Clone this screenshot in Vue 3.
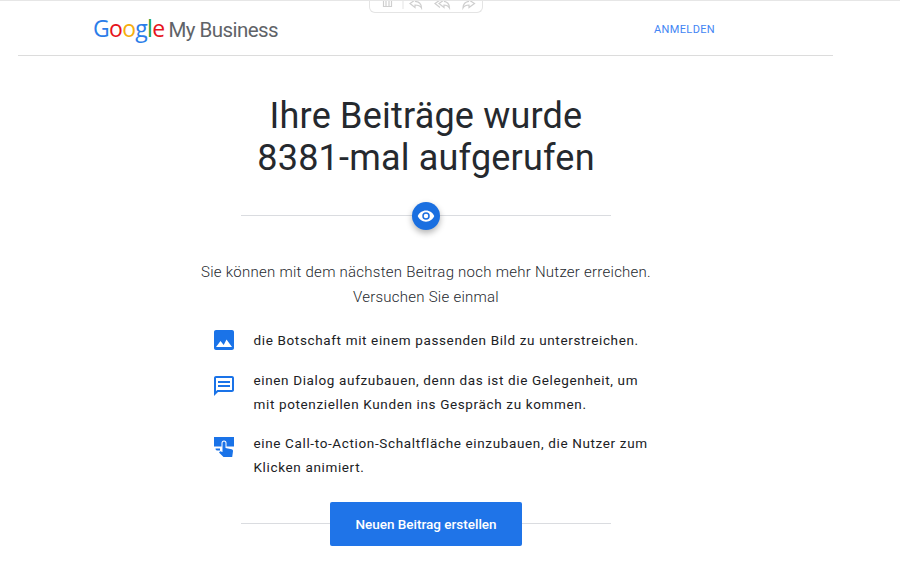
<script setup>
const items = [
  { id: 'image', lines: ['die Botschaft mit einem passenden Bild zu unterstreichen.'] },
  { id: 'chat', lines: ['einen Dialog aufzubauen, denn das ist die Gelegenheit, um', 'mit potenziellen Kunden ins Gespräch zu kommen.'] },
  { id: 'touch', lines: ['eine Call-to-Action-Schaltfläche einzubauen, die Nutzer zum', 'Klicken animiert.'] },
]
</script>

<template>
  <div class="page">
    <div class="toolbar" aria-hidden="true">
      <svg width="114" height="12" viewBox="0 0 114 12" fill="none" stroke="#cfcfcf" stroke-width="1.2">
        <path d="M14.500 0v6.500h8V0M17 0v6M20 0v6" />
        <path d="M34 0v9" stroke="#e8e8e8" />
        <path d="M46 0L41 3.500 46 7.500V5c3 0 5 .5 6.500 3C52.500 4 50 1.500 46 1.500" />
        <path d="M71 0L66 3.500 71 7.500M75 0L70 3.500 75 7.500V5c2 0 4 .5 5.500 3C80.500 4 78 1.500 75 1.500" />
        <path d="M100 0L105.500 3.500 100 7.500V5c-3 0-4.500.5-6 3 0-4 2.500-6.500 6-6.500" />
      </svg>
    </div>

    <header class="header">
      <div class="logo">
        <span class="google"><span class="b">G</span><span class="r">o</span><span class="y">o</span><span class="b">g</span><span class="g">l</span><span class="r">e</span></span>
        <span class="product">My Business</span>
      </div>
      <a class="signin">ANMELDEN</a>
    </header>

    <main class="main">
      <h1 class="title">Ihre Beiträge wurde<br />8381-mal aufgerufen</h1>

      <div class="divider">
        <span class="eye">
          <svg width="18" height="18" viewBox="0 0 24 24"><path fill="#fff" d="M12 4.500C7 4.500 2.700 7.600 1 12c1.700 4.400 6 7.500 11 7.500s9.300-3.100 11-7.500c-1.700-4.400-6-7.500-11-7.500zM12 17a5 5 0 1 1 0-10 5 5 0 0 1 0 10zm0-8a3 3 0 1 0 0 6 3 3 0 0 0 0-6z" /></svg>
        </span>
      </div>

      <p class="intro">Sie können mit dem nächsten Beitrag noch mehr Nutzer erreichen.<br />Versuchen Sie einmal</p>

      <ul class="list">
        <li v-for="item in items" :key="item.id" class="item" :class="'item-' + item.id">
          <span class="icon">
            <svg v-if="item.id === 'image'" width="24" height="24" viewBox="0 0 24 24"><path fill="#1a73e8" d="M22 20V4c0-1.100-.9-2-2-2H4c-1.100 0-2 .9-2 2v16c0 1.100.9 2 2 2h16c1.100 0 2-.9 2-2zM4 19l4.500-6 3.200 4 2.800-5.500L20 19H4z" /></svg>
            <svg v-else-if="item.id === 'chat'" width="24" height="24" viewBox="0 0 24 24"><path fill="#1a73e8" d="M20 2H4c-1.100 0-2 .9-2 2v18l4-4h14c1.100 0 2-.9 2-2V4c0-1.100-.9-2-2-2zm0 14H5.200L4 17.200V4h16v12zM6 7h12v2H6V7zm0 4h12v2H6v-2z" /></svg>
            <svg v-else width="24" height="24" viewBox="0 0 24 24"><path fill="#1a73e8" d="M2 2h20v9.500h-7.500V8a2.500 2.500 0 0 0-5 0v3.500H2V2zM10.500 8a1.500 1.500 0 0 1 3 0v5l6 1.200c1 .2 1.700 1 1.500 2.100L20.200 22H11.500L7 17.500l1.200-1.200 2.300.7V8zM3.500 13.500h4.500V15.500H5c-.8 0-1.500-.8-1.500-2z" /></svg>
          </span>
          <span class="text"><template v-for="(l, i) in item.lines" :key="i"><br v-if="i" />{{ l }}</template></span>
        </li>
      </ul>

      <div class="cta">
        <button class="button">Neuen Beitrag erstellen</button>
      </div>
    </main>
  </div>
</template>

<style>
html, body { margin: 0; background: #fff; overflow: hidden; }
</style>

<style scoped>
.page {
  position: relative;
  width: 900px;
  height: 579px;
  overflow: hidden;
  box-sizing: border-box;
  border-top: 1px solid #e6e6e6;
  font-family: Roboto, "Liberation Sans", sans-serif;
  color: #202124;
  background: #fff;
}
.toolbar {
  position: absolute;
  left: 369px;
  top: -1px;
  width: 114px;
  height: 13px;
  box-sizing: border-box;
  border: 1px solid #e4e4e4;
  border-top: 0;
  border-radius: 0 0 6px 6px;
  background: #fff;
  overflow: hidden;
}
.toolbar svg { display: block; margin-left: -1px; }
.header {
  margin: 0 67px 0 18px;
  height: 55px;
  box-sizing: border-box;
  border-bottom: 1px solid #dcdcdc;
  padding: 0 118px 0 75px;
  display: flex;
  align-items: center;
  justify-content: space-between;
}
.logo { display: flex; gap: 4px; align-items: baseline; font-size: 23px; letter-spacing: -0.7px; }
.google { font-family: "Open Sans", sans-serif; }
.product { color: #5f6368; font-size: 20.500px; letter-spacing: -0.55px; }
.b { color: #2b7de9; } .r { color: #e6131c; } .y { color: #f6ae0c; } .g { color: #1fa33c; }
.signin { color: #4285f4; font-size: 11px; letter-spacing: 0.35px; margin-top: 2px; }
.main {
  width: 852px;
  display: flex;
  flex-direction: column;
  align-items: center;
}
.title {
  margin: 39px 0 0;
  font-size: 36px;
  line-height: 42px;
  font-weight: 400;
  text-align: center;
  color: #25292e;
  letter-spacing: 0.2px;
}
.divider {
  width: 370px;
  height: 1px;
  background: #dadce0;
  margin-top: 36px;
  display: flex;
  justify-content: center;
  align-items: center;
}
.eye {
  width: 28px;
  height: 28px;
  flex: none;
  border-radius: 50%;
  background: #1a6fe0;
  box-shadow: 0 3px 6px rgba(0, 0, 0, 0.3);
  display: flex;
  align-items: center;
  justify-content: center;
}
.intro {
  margin: 44px 0 0;
  font-size: 15px;
  font-weight: 300;
  line-height: 25px;
  text-align: center;
  color: #25292e;
  letter-spacing: 0.25px;
}
.list {
  list-style: none;
  margin: 18px 0 0 11px;
  padding: 0;
  width: 440px;
}
.item {
  display: flex;
  gap: 18px;
  margin-bottom: 15.500px;
}
.icon { width: 24px; height: 24px; flex: none; }
.item-chat .icon { margin-top: 6px; }
.item-touch .icon { margin-top: 4px; }
.text {
  font-size: 13.500px;
  line-height: 24px;
  letter-spacing: 0.64px;
  color: #202124;
  white-space: nowrap;
}
.cta {
  width: 370px;
  margin-top: 7px;
  display: flex;
  justify-content: center;
  background: linear-gradient(#dadce0, #dadce0) 0 21px / 100% 1px no-repeat;
}
.button {
  width: 192px;
  height: 44px;
  border: 0;
  border-radius: 2px;
  background: #1f74e8;
  color: #fff;
  font-family: inherit;
  font-size: 13.500px;
  font-weight: 500;
  letter-spacing: 0;
}
</style>
